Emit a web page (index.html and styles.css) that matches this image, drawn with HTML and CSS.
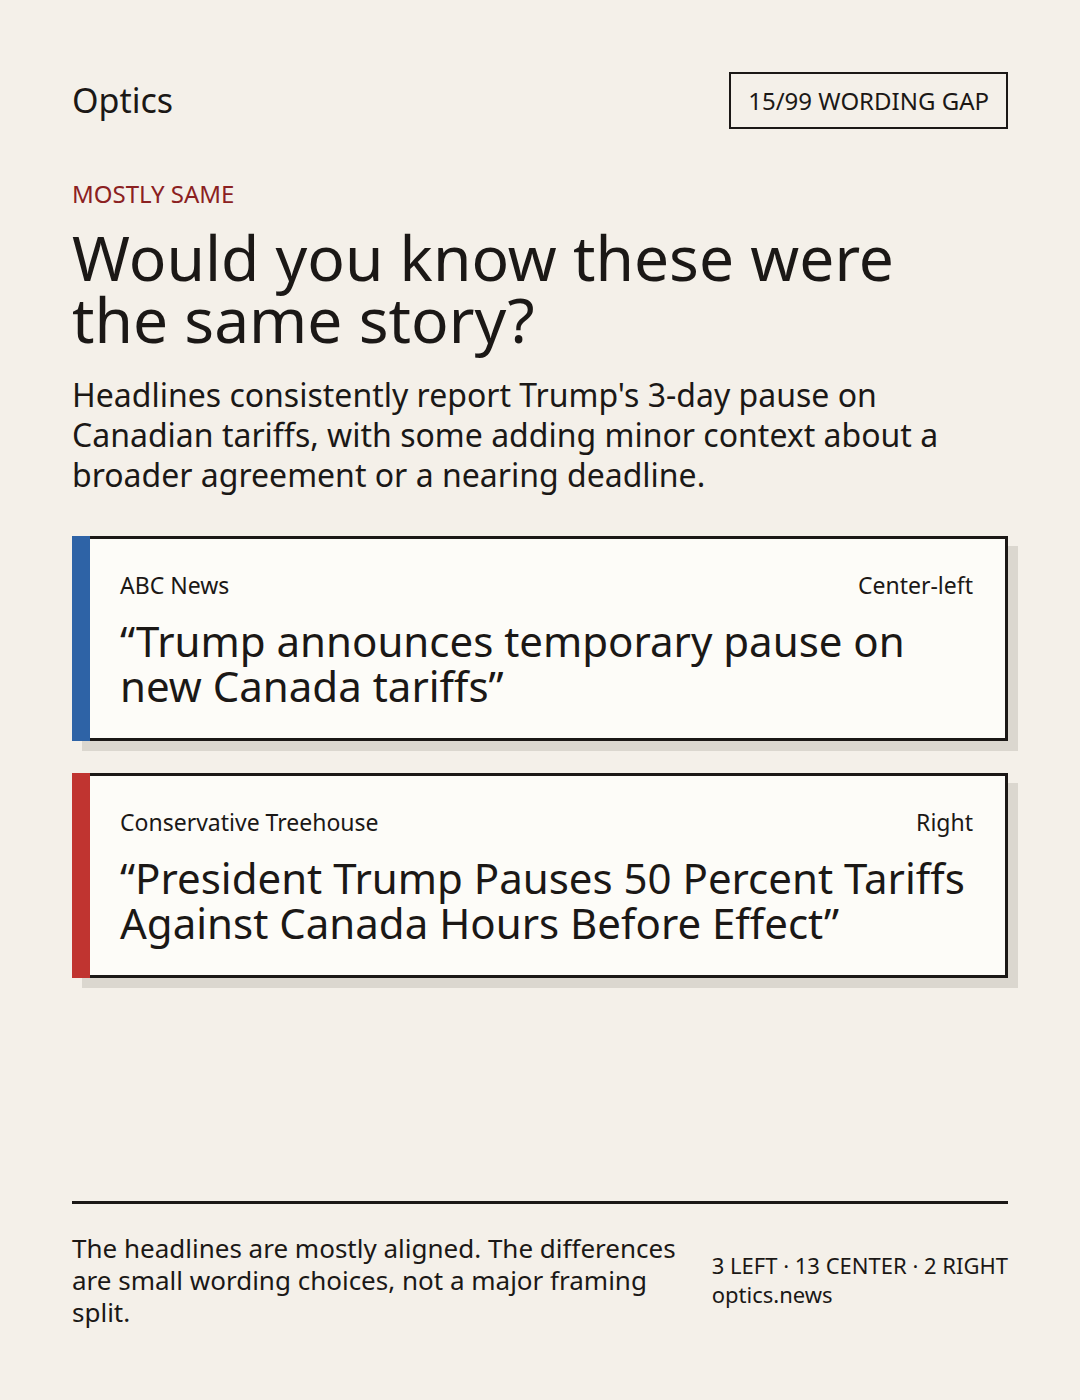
FILE: index.html
```html
<!DOCTYPE html>
<html lang="en">
<head>
<meta charset="utf-8">
<title>Optics</title>
<link rel="stylesheet" href="styles.css">
</head>
<body>
<main class="page">
  <header class="topbar">
    <div class="brand">Optics</div>
    <div class="badge">15/99 WORDING GAP</div>
  </header>

  <section class="intro">
    <div class="eyebrow">MOSTLY SAME</div>
    <h1 class="title">Would you know these were the same story?</h1>
    <p class="summary">Headlines consistently report Trump's 3-day pause on Canadian tariffs, with some adding minor context about a broader agreement or a nearing deadline.</p>
  </section>

  <section class="cards">
    <article class="card card-left">
      <div class="stripe"></div>
      <div class="card-body">
        <div class="card-meta">
          <span class="source">ABC News</span>
          <span class="lean">Center-left</span>
        </div>
        <div class="quote">“Trump announces temporary pause on new Canada tariffs”</div>
      </div>
    </article>
    <article class="card card-right">
      <div class="stripe"></div>
      <div class="card-body">
        <div class="card-meta">
          <span class="source">Conservative Treehouse</span>
          <span class="lean">Right</span>
        </div>
        <div class="quote">“President Trump Pauses 50 Percent Tariffs Against Canada Hours Before Effect”</div>
      </div>
    </article>
  </section>

  <footer class="footer">
    <p class="footer-note">The headlines are mostly aligned. The differences are small wording choices, not a major framing split.</p>
    <div class="footer-stats">
      <div>3 LEFT · 13 CENTER · 2 RIGHT</div>
      <div>optics.news</div>
    </div>
  </footer>
</main>
</body>
</html>
```
FILE: styles.css
```css
* { box-sizing: border-box; }
html, body { margin: 0; padding: 0; }
body {
  background: #f4f0e9;
  color: #1b1816;
  font-family: "Noto Sans", "Open Sans", sans-serif;
}
.page {
  min-height: 1400px;
  padding: 72px;
  display: flex;
  flex-direction: column;
}
.topbar {
  display: flex;
  justify-content: space-between;
  align-items: center;
}
.brand {
  font-size: 34px;
  line-height: 1.2;
}
.badge {
  border: 2px solid #1b1816;
  font-size: 24px;
  line-height: 35px;
  padding: 9px 17px;
}
.intro {
  margin-top: 48px;
}
.eyebrow {
  color: #8b2121;
  font-size: 24px;
  line-height: 34px;
}
.title {
  margin: 15px 0 0;
  max-width: 850px;
  font-weight: 400;
  font-size: 62.3px;
  line-height: 62px;
}
.summary {
  margin: 25px 0 0;
  font-size: 32px;
  line-height: 40px;
}
.cards {
  margin-top: 41px;
  display: flex;
  flex-direction: column;
  gap: 32px;
}
.card {
  display: flex;
  box-shadow: 10px 10px 0 #dbd7cf;
  background: #fdfcf8;
}
.stripe {
  width: 18px;
  flex: none;
}
.card-left .stripe { background: #2e63a6; }
.card-right .stripe { background: #c03430; }
.card-body {
  flex: 1;
  border: 3px solid #1b1816;
  border-left: none;
  padding: 31px 32px 30px 30px;
}
.card-meta {
  display: flex;
  justify-content: space-between;
  font-size: 23px;
  line-height: 30px;
}
.quote {
  margin-top: 18px;
  font-size: 42px;
  line-height: 45px;
}
.footer {
  margin-top: auto;
  border-top: 3px solid #1b1816;
  padding-top: 28px;
  display: flex;
  justify-content: space-between;
  align-items: center;
  gap: 32px;
}
.footer-note {
  margin: 0;
  flex: 1;
  font-size: 26px;
  line-height: 32px;
}
.footer-stats {
  flex: none;
  white-space: nowrap;
  font-size: 22px;
  line-height: 29px;
}
```
